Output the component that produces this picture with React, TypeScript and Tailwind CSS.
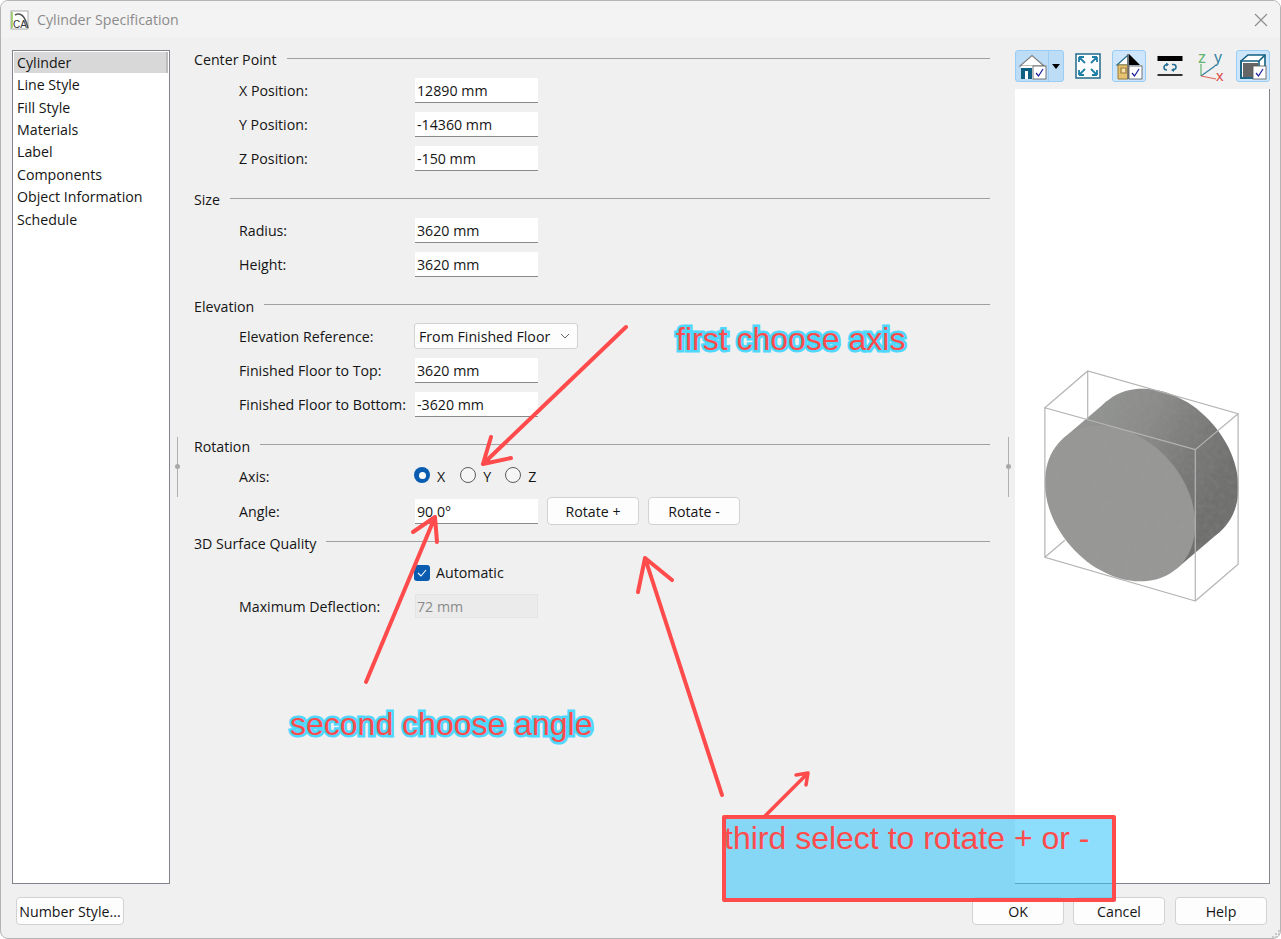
import React from 'react';

const font = 'font-["Open_Sans",sans-serif]';

function Heading({ title, ruleClass = 'mt-[8px]', className = '' }: { title: string; ruleClass?: string; className?: string }) {
  return (
    <div className={`flex h-[20px] items-start gap-[10px] pl-[10px] ${className}`}>
      <span className="whitespace-nowrap pt-px">{title}</span>
      <div className={`h-px flex-1 bg-[#a0a0a0] ${ruleClass}`} />
    </div>
  );
}

function Row({ label, children, className = '' }: { label?: string; children: React.ReactNode; className?: string }) {
  return (
    <div className={`flex h-[34px] items-center pl-[55px] ${className}`}>
      <span className="w-[176px] shrink-0 whitespace-nowrap pt-[2px]">{label}</span>
      {children}
    </div>
  );
}

function Field({ value, disabled = false }: { value: string; disabled?: boolean }) {
  return (
    <div
      className={
        disabled
          ? 'flex h-[24px] w-[123px] items-center border border-[#e4e4e4] bg-[#ebebeb] pl-[1px] pt-[2px] text-[#8a8a8a]'
          : 'flex h-[25px] w-[123px] items-center border-b border-b-[#8a8a8a] bg-white pl-[2px] pt-[3px]'
      }
    >
      {value}
    </div>
  );
}

function Button({ label, className = '' }: { label: string; className?: string }) {
  return (
    <div className={`flex h-[28px] items-center justify-center rounded-[4px] border border-[#d2d2d2] bg-[#fdfdfd] pt-[2px] ${className}`}>
      {label}
    </div>
  );
}

function Radio({ checked = false }: { checked?: boolean }) {
  return checked ? (
    <div className="flex h-[16px] w-[16px] items-center justify-center rounded-full bg-[#0a5cb0]">
      <div className="h-[7px] w-[7px] rounded-full bg-white" />
    </div>
  ) : (
    <div className="h-[16px] w-[16px] rounded-full border border-[#5c5c5c] bg-[#f6f6f6]" />
  );
}

function Splitter({ className = '' }: { className?: string }) {
  return (
    <div className={`flex h-full shrink-0 flex-col items-center pt-[387px] ${className}`}>
      <div className="relative h-[60px] w-px bg-[#b0b0b0]">
        <div className="absolute left-[-2px] top-[27px] h-[5px] w-[5px] rounded-full bg-[#a8a8a8]" />
      </div>
    </div>
  );
}

function Check({ x, y }: { x: number; y: number }) {
  return (
    <g>
      <rect x={x} y={y} width="13" height="13" fill="#fff" stroke="#555" strokeWidth="0.8" />
      <path d={`M${x + 3} ${y + 7}l2.500 3 4.500-7`} fill="none" stroke="#1a1a9c" strokeWidth="1.2" />
    </g>
  );
}

function Toolbar() {
  return (
    <div className="flex h-[39px] items-start">
      <div className="flex h-[32px] w-[49px] rounded-[3px] border border-[#99cdf5] bg-[#bddcf5]">
        <svg width="32" height="30" viewBox="0 0 32 30" className="shrink-0">
          <path d="M4 15L16 4.500 28 15z" fill="#fff" stroke="#808080" strokeWidth="1.2" />
          <path d="M5 15h21v13H5z" fill="#fff" />
          <path d="M5 17h11v11h-4v-8H9v8H5z" fill="#0d5f82" />
          <Check x={17} y={15} />
        </svg>
        <div className="flex flex-1 items-center justify-center border-l border-[#99cdf5]">
          <div className="h-0 w-0 border-x-[4px] border-t-[5px] border-x-transparent border-t-black" />
        </div>
      </div>
      <div className="ml-[10px] flex h-[32px] w-[27px] items-center justify-center">
        <svg width="26" height="26" viewBox="0 0 26 26">
          <rect x="1" y="1" width="24" height="24" fill="#fff" stroke="#236a8a" strokeWidth="1.5" />
          <path d="M4 4l6 6M4 4v5M4 4h5M22 4l-6 6M22 4v5M22 4h-5M4 22l6-6M4 22v-5M4 22h5M22 22l-6-6M22 22v-5M22 22h-5" fill="none" stroke="#1f7ea8" strokeWidth="1.8" />
        </svg>
      </div>
      <div className="ml-[11px] flex h-[32px] w-[34px] items-center justify-center rounded-[3px] border border-[#99cdf5] bg-[#cde6fb]">
        <svg width="28" height="28" viewBox="0 0 28 28">
          <path d="M2 13L13 3v10z" fill="#fff" stroke="#236a8a" strokeWidth="1.2" />
          <path d="M14 2l11 11H14z" fill="#000" />
          <path d="M3 13h10v14H3z" fill="#e6c273" stroke="#9a7a32" strokeWidth="1" />
          <path d="M6 16h5v5H6z" fill="#f3e2b0" stroke="#9a7a32" strokeWidth="1.2" />
          <path d="M13 2v25" stroke="#6f6f6f" strokeWidth="1.500" />
          <Check x={14} y={14} />
        </svg>
      </div>
      <div className="ml-[10px] flex h-[32px] w-[27px] items-center justify-center">
        <svg width="26" height="24" viewBox="0 0 26 24">
          <rect x="0.500" y="2" width="25" height="5" fill="#000" />
          <rect x="0.500" y="20" width="25" height="2" fill="#333" />
          <path d="M11 10.500c-2.500 0-4 1-4 3s1 2.500 3 2.500M15 10.500h1.500c2 0 2.500 1 2.500 2.500s-1.500 3-4 3" fill="none" stroke="#236f94" strokeWidth="1.600" />
          <path d="M9 8.500l3 2-3 2zM17 14l-3 2 3 2z" fill="#236f94" />
        </svg>
      </div>
      <div className="ml-[15px] flex h-[32px] w-[27px] items-center justify-center overflow-visible">
        <svg width="27" height="30" viewBox="0 0 27 30" className="overflow-visible">
          <path d="M3 25V13" stroke="#5fb36f" strokeWidth="1.200" />
          <path d="M3 25L17 15" stroke="#2f7f9f" strokeWidth="1.200" />
          <path d="M3 25L18 28" stroke="#e2645e" strokeWidth="1.200" />
          <text x="0" y="12" fontSize="16" fill="#62b56f" fontFamily="Liberation Sans">z</text>
          <text x="16" y="12" fontSize="16" fill="#2f7f9f" fontFamily="Liberation Sans">y</text>
          <text x="18" y="30" fontSize="15" fill="#dc4b45" fontFamily="Liberation Sans">x</text>
        </svg>
      </div>
      <div className="ml-[11px] flex h-[32px] w-[34px] items-center justify-center rounded-[3px] border border-[#99cdf5] bg-[#cde6fb]">
        <svg width="28" height="28" viewBox="0 0 28 28">
          <path d="M2 9l7-6h17v18l-6 5H2z" fill="#fff" stroke="#135f80" strokeWidth="1.600" />
          <path d="M2 9h18v17H2zM20 9l6-6" fill="none" stroke="#135f80" strokeWidth="1.600" />
          <rect x="4" y="11" width="15" height="14" fill="#666" />
          <Check x={14} y={14} />
        </svg>
      </div>
    </div>
  );
}

function ellipsePath(cx: number, cy: number) {
  const pts: string[] = [];
  for (let i = 0; i < 96; i++) {
    const t = (i / 96) * Math.PI * 2;
    const x = cx + 75.5 * Math.cos(t);
    const y = cy + 21.2 * Math.cos(t) + 75.3 * Math.sin(t);
    pts.push(`${x.toFixed(1)} ${y.toFixed(1)}`);
  }
  return `M${pts.join('L')}z`;
}

function Cylinder() {
  return (
    <svg viewBox="1015 89 255 795" className="block h-full w-full">
      <defs>
        <linearGradient id="side" gradientUnits="userSpaceOnUse" x1="1085" y1="400" x2="1228" y2="480">
          <stop offset="0" stopColor="#949693" />
          <stop offset="0.4" stopColor="#8b8c8a" />
          <stop offset="0.75" stopColor="#787977" />
          <stop offset="1" stopColor="#6e6f6d" />
        </linearGradient>
        <filter id="grain" x="0" y="0" width="100%" height="100%">
          <feTurbulence type="fractalNoise" baseFrequency="0.2" numOctaves="2" seed="4" />
          <feColorMatrix values="0 0 0 0 0.35  0 0 0 0 0.35  0 0 0 0 0.35  0 0 0 0.25 -0.07" />
          <feComposite in2="SourceAlpha" operator="in" />
          <feMerge>
            <feMergeNode in="SourceGraphic" />
            <feMergeNode />
          </feMerge>
        </filter>
      </defs>
      <g filter="url(#grain)">
        <path d={ellipsePath(1163.8, 467)} fill="url(#side)" />
        <path d="M1177.100 569.700L1063.900 438.300L1107.200 401.300L1220.400 532.700z" fill="url(#side)" />
        <path d={ellipsePath(1120.5, 504)} fill="#979896" />
      </g>
      <path
        d="M1045 408L1088 371L1239 414L1196 450zM1045 408V558L1196 602V450M1239 414V565L1196 602M1045 558L1065 541M1088 371V419"
        fill="none"
        stroke="#b4b4b4"
        strokeWidth="1.200"
      />
    </svg>
  );
}

export default function App() {
  const items = ['Line Style', 'Fill Style', 'Materials', 'Label', 'Components', 'Object Information', 'Schedule'];
  const outline = '[-webkit-text-stroke:5px_#4fd8ff] [paint-order:stroke_fill]';

  return (
    <div className={`relative h-[939px] w-[1281px] overflow-hidden rounded-[8px] border border-[#b4b4b4] bg-[#f0f0f0] text-[14.2px] leading-[20px] text-[#151515] ${font}`}>
      {/* title bar */}
      <div className="flex h-[37px] items-center bg-[#f3f3f3] pl-[9px] pr-[12px]">
        <svg width="20" height="20" viewBox="0 0 20 20" className="shrink-0">
          <rect x="1" y="1" width="17" height="18" fill="#fff" stroke="#9a9a9a" strokeWidth="0.800" />
          <path d="M2 2v16" stroke="#8bc34a" strokeWidth="1.400" />
          <path d="M5 5c6-3 10 1 13 13" fill="none" stroke="#555" strokeWidth="1.500" />
          <text x="3" y="18" fontSize="10" fill="#333" fontFamily="Liberation Sans">CA</text>
        </svg>
        <span className="ml-[7px] text-[#8b8b8b]">Cylinder Specification</span>
        <svg width="14" height="14" viewBox="0 0 14 14" className="ml-auto">
          <path d="M1 1l12 12M13 1L1 13" stroke="#8c8c8c" strokeWidth="1.100" />
        </svg>
      </div>

      <div className="flex h-[846px] pl-[11px] pt-[12px]">
        {/* category list */}
        <div className="h-full w-[158px] shrink-0 border border-[#83838b] bg-white p-px">
          <div className="flex h-[21px] items-center border-r-2 border-[#bdbdbd] bg-[#d8d8d8] pl-[3px]">Cylinder</div>
          {items.map((item) => (
            <div key={item} className="flex h-[22.43px] items-center pl-[3px] pt-[2px]">
              {item}
            </div>
          ))}
        </div>

        <Splitter className="w-[14px]" />

        {/* form */}
        <div className="w-[806px] shrink-0 -translate-y-[1px]">
          <Heading title="Center Point" ruleClass="mt-[9px]" />
          <Row label="X Position:" className="mt-[4px]"><Field value="12890 mm" /></Row>
          <Row label="Y Position:"><Field value="-14360 mm" /></Row>
          <Row label="Z Position:"><Field value="-150 mm" /></Row>

          <Heading title="Size" ruleClass="mt-[9px]" className="mt-[14px]" />
          <Row label="Radius:" className="mt-[4px]"><Field value="3620 mm" /></Row>
          <Row label="Height:"><Field value="3620 mm" /></Row>

          <Heading title="Elevation" className="mt-[15px]" />
          <Row label="Elevation Reference:" className="mt-[3px]">
            <div className="flex h-[26px] w-[164px] -translate-x-px items-center justify-between rounded-[3px] border border-[#d2d2d2] bg-[#fdfdfd] pl-[4px] pr-[7px]">
              <span className="pt-[2px]">From Finished Floor</span>
              <svg width="10" height="6" viewBox="0 0 10 6"><path d="M1 1l4 4 4-4" fill="none" stroke="#666" strokeWidth="1" /></svg>
            </div>
          </Row>
          <Row label="Finished Floor to Top:"><Field value="3620 mm" /></Row>
          <Row label="Finished Floor to Bottom:"><Field value="-3620 mm" /></Row>

          <Heading title="Rotation" className="mt-[15px]" />
          <Row label="Axis:" className="mt-[3px]">
            <div className="flex -translate-x-px -translate-y-px items-center">
              <Radio checked />
              <span className="ml-[7px] pt-[3px]">X</span>
              <div className="ml-[15px]"><Radio /></div>
              <span className="ml-[7px] pt-[3px]">Y</span>
              <div className="ml-[14px]"><Radio /></div>
              <span className="ml-[7px] pt-[3px]">Z</span>
            </div>
          </Row>
          <Row label="Angle:" className="mt-px">
            <Field value="90.0°" />
            <Button label="Rotate +" className="ml-[9px] w-[92px]" />
            <Button label="Rotate -" className="ml-[9px] w-[92px]" />
          </Row>

          <Heading title="3D Surface Quality" className="mt-[5px]" />
          <Row className="mt-[3px] !h-[33px]">
            <div className="flex -translate-x-px items-center">
              <div className="flex h-[16px] w-[16px] items-center justify-center rounded-[3px] bg-[#0a5cb0]">
                <svg width="10" height="8" viewBox="0 0 10 8"><path d="M1 4l3 3 5-6" fill="none" stroke="#fff" strokeWidth="1.100" /></svg>
              </div>
              <span className="ml-[6px]">Automatic</span>
            </div>
          </Row>
          <Row label="Maximum Deflection:"><Field value="72 mm" disabled /></Row>
        </div>

        <div className="w-[12px] shrink-0" />
        <Splitter className="w-[13px]" />

        {/* preview */}
        <div className="flex h-full w-[255px] shrink-0 flex-col">
          <Toolbar />
          <div className="flex-1 border-b border-r border-[#83838b] bg-white">
            <Cylinder />
          </div>
        </div>
      </div>

      {/* footer */}
      <div className="mt-[13px] flex pl-[15px] pr-[13px]">
        <Button label="Number Style..." className="w-[108px]" />
        <div className="ml-auto flex gap-[9px]">
          <Button label="OK" className="-translate-x-px w-[92px]" />
          <Button label="Cancel" className="-translate-x-px w-[92px]" />
          <Button label="Help" className="w-[92px]" />
        </div>
      </div>

      {/* resize grip */}
      <svg width="9" height="9" viewBox="0 0 9 9" className="absolute bottom-0 right-0">
        <path d="M7 1h2v2H7zM4 4h2v2H4zM7 4h2v2H7zM1 7h2v2H1zM4 7h2v2H4zM7 7h2v2H7z" fill="#c8c8c8" />
      </svg>

      {/* annotations drawn on top of the dialog */}
      <svg width="1281" height="939" viewBox="0 0 1281 939" className="pointer-events-none absolute left-[-1px] top-[-1px]">
        <g fill="none" stroke="#ff4b4b" strokeLinecap="round" strokeLinejoin="round" strokeWidth="4">
          <path d="M626 327L483 464M491 437L483 464L511 458" />
          <path d="M366 682L435 517M413 532L435 517L437 542" />
          <path d="M722 795L645 558M638 592L645 558L672 580" />
          <path d="M765 816L808 773M796 775L808 773L806 785" strokeWidth="3.500" />
        </g>
      </svg>
      <div className={`absolute left-[675px] top-[320px] whitespace-nowrap font-["Liberation_Sans",sans-serif] text-[32px] leading-[36px] text-[#ff4b4b] ${outline}`}>
        first choose axis
      </div>
      <div className={`absolute left-[289px] top-[705px] whitespace-nowrap font-["Liberation_Sans",sans-serif] text-[32px] leading-[36px] text-[#ff4b4b] ${outline}`}>
        second choose angle
      </div>
      <div className='absolute left-[721px] top-[814px] h-[87px] w-[394px] rounded-[2px] border-[4px] border-[#ff4b4b] bg-[#2fc3fb]/55 font-["Liberation_Sans",sans-serif] text-[32px] leading-[38px] text-[#ff4b4b]'>
        <span className="-ml-[2px]">third select to rotate + or -</span>
      </div>
    </div>
  );
}
